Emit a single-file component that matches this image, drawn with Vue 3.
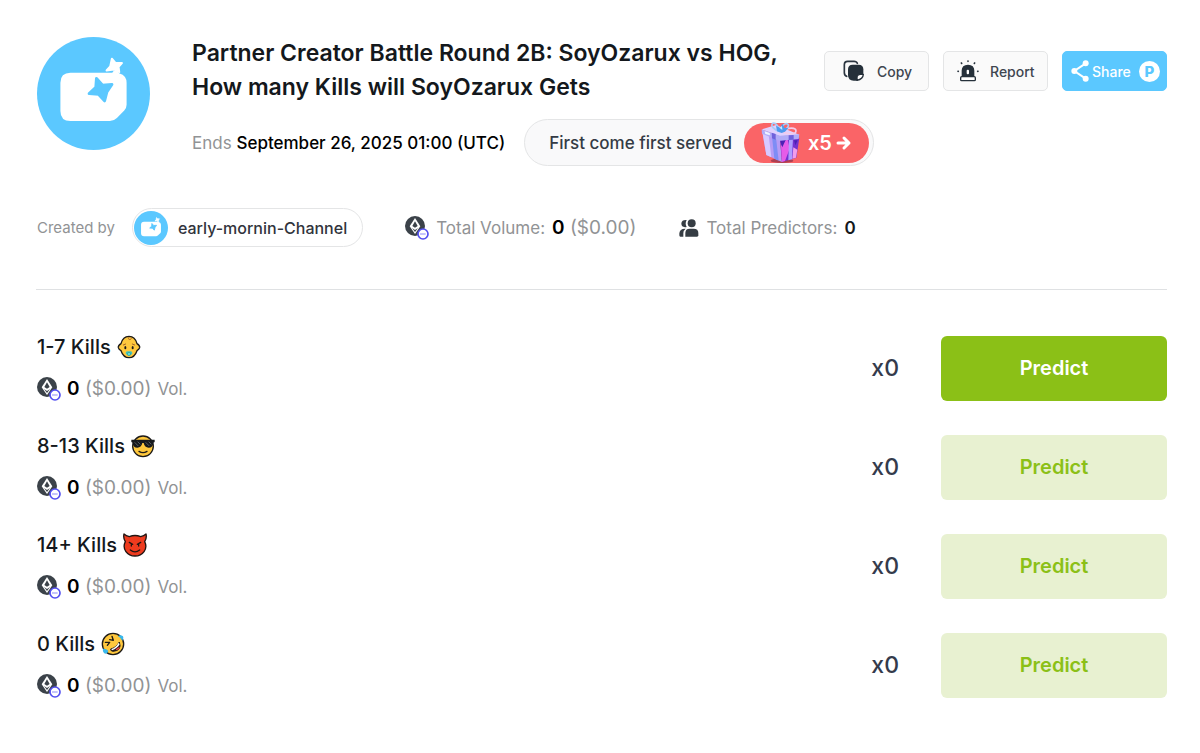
<script setup>
const options = [
  { id: 1, label: '1-7 Kills', emoji: 'baby', picked: true },
  { id: 2, label: '8-13 Kills', emoji: 'cool', picked: false },
  { id: 3, label: '14+ Kills', emoji: 'devil', picked: false },
  { id: 4, label: '0 Kills', emoji: 'rofl', picked: false }
]
</script>

<template>
  <svg class="sprite" aria-hidden="true">
    <symbol id="brand" viewBox="21 21 338 338">
      <circle cx="190" cy="190" r="169" fill="#5bc8ff" />
      <path
        fill="#fff"
        d="M121 128H245Q251 127 249 122H263Q262 128 268 130Q289 136 289 158V224Q289 234 282 241L260 263Q251 272 239 272H121Q91 272 91 242V158Q91 128 121 128Z"
      />
      <path
        fill="#fff"
        stroke="#fff"
        stroke-width="6"
        stroke-linejoin="round"
        d="M245 86L255 98L275 99L265 110L267 126L251 118L229 121L240 109Z"
      />
      <path
        fill="#5bc8ff"
        stroke="#5bc8ff"
        stroke-width="9"
        stroke-linejoin="round"
        d="M199 145L217 165L245 163L230 185L223 212L205 192L177 190L197 172Z"
      />
    </symbol>
    <symbol id="coin" viewBox="0 0 72 72">
      <circle cx="30" cy="30" r="30" fill="#3b4249" />
      <path fill="#fff" d="M30 6L46 31L30 54L14 31Z" />
      <path fill="#3b4249" d="M30 16L22 30L30 35L38 30ZM21 36L30 42L39 36L30 48Z" />
      <circle cx="54" cy="54" r="15" fill="#fff" stroke="#5350f0" stroke-width="5" />
      <path stroke="#aaa8fb" stroke-width="4" d="M45 54H62" />
    </symbol>
    <symbol id="baby" viewBox="0 0 72 72">
      <path
        fill="#ffc83d"
        stroke="#1d1a18"
        stroke-width="4"
        d="M36 4C50 4 57 14 60 26C65 29 69 33 68 38C67 42 63 45 60 47C56 59 48 68 36 68C24 68 16 59 12 47C8 45 5 42 4 38C3 33 7 29 12 26C15 14 22 4 36 4Z"
      />
      <path fill="none" stroke="#a8642a" stroke-width="3" stroke-linecap="round" d="M36 7C30 13 40 17 43 11M19 30L26 27M53 30L46 27" />
      <ellipse cx="25" cy="38" rx="3" ry="5" fill="#1d1a18" />
      <ellipse cx="47" cy="38" rx="3" ry="5" fill="#1d1a18" />
      <rect x="26" y="49" width="20" height="10" rx="5" fill="#42c5be" />
      <circle cx="36" cy="57" r="5" fill="#65dbd2" stroke="#299b9a" stroke-width="2" />
    </symbol>
    <symbol id="cool" viewBox="0 0 72 72">
      <circle cx="36" cy="37" r="31" fill="#ffc83d" stroke="#1d1a18" stroke-width="4" />
      <path fill="#17191c" d="M1 17H71V24L67 26Q66 41 53 41Q41 41 38 27H34Q31 41 19 41Q6 41 5 26L1 24Z" />
      <path stroke="#798087" stroke-width="2" d="M11 25L22 36M20 23L28 31M44 25L55 36M53 23L61 31" />
      <path fill="none" stroke="#1d1a18" stroke-width="4" stroke-linecap="round" d="M24 52Q36 60 48 52" />
    </symbol>
    <symbol id="devil" viewBox="0 0 72 72">
      <path
        fill="#ee3b1e"
        stroke="#221512"
        stroke-width="4"
        stroke-linejoin="round"
        d="M3 3Q9 9 19 11Q36 4 53 11Q63 9 69 3Q72 15 65 26C76 48 59 69 36 69S-4 48 7 26Q0 15 3 3Z"
      />
      <path
        fill="none"
        stroke="#221512"
        stroke-width="4"
        stroke-linecap="round"
        stroke-linejoin="round"
        d="M19 28L29 34M53 28L43 34M25 34V39M47 34V39M22 51Q36 62 50 51"
      />
    </symbol>
    <symbol id="rofl" viewBox="0 0 72 72">
      <circle cx="36" cy="36" r="32" fill="#ffc83d" stroke="#1d1a18" stroke-width="4" />
      <path
        fill="none"
        stroke="#1d1a18"
        stroke-width="4"
        stroke-linecap="round"
        stroke-linejoin="round"
        d="M13 31L26 31L19 40M33 13L37 25L26 23"
      />
      <path fill="#2b1718" stroke="#1d1a18" stroke-width="3" stroke-linejoin="round" d="M55 30Q64 56 36 58Q28 57 29 51Q46 47 55 30Z" />
      <path fill="#fff" d="M53 32L56 37Q49 49 33 55L31 51Q45 47 53 32Z" />
      <path fill="#e94144" d="M45 52Q53 43 57 47Q54 54 45 55Z" />
      <path fill="#39b8ec" d="M51 13Q58 7 66 13Q70 20 64 26Q59 17 51 13ZM6 50Q15 49 22 56Q20 65 12 65Q4 60 6 50Z" />
    </symbol>
  </svg>

  <main class="page">
    <header class="head">
      <svg class="avatar" role="img" aria-label="Channel picture"><use href="#brand" /></svg>
      <div class="intro">
        <h1>Partner Creator Battle Round 2B: SoyOzarux vs HOG, How many Kills will SoyOzarux Gets</h1>
        <div class="schedule">
          <p class="ends">Ends <strong>September 26, 2025 01:00 (UTC)</strong></p>
          <a href="#rewards" class="promo">
            <span>First come first served</span>
            <span class="reward">
              <svg class="gift" viewBox="0 0 120 126" aria-hidden="true">
                <ellipse cx="66" cy="116" rx="34" ry="7" fill="#8b3149" opacity=".7" />
                <path fill="#b79cf5" d="M6 24L59 42L66 120L19 99Z" />
                <path fill="#d7c9ff" d="M6 24L25 30L34 106L19 99Z" />
                <path fill="#7e8df5" d="M35 34L47 38L56 116L43 110Z" />
                <path fill="#7431cf" d="M59 42L118 47L109 107L66 120Z" />
                <path fill="#e65ce8" d="M63 72L82 48L89 80L75 117L66 120Z" />
                <path fill="#ae9dff" d="M87 47L99 46L96 112L85 115Z" />
                <path fill="#f29dea" d="M100 76L112 83L108 107L97 110Z" />
                <path fill="#4b21b4" d="M61 58L77 54L67 76ZM102 55L113 55L106 70Z" />
                <path fill="#e0d0ff" d="M5 22L48 9L118 38L60 43Z" />
                <path fill="#b1acf7" d="M5 22L60 41L118 37L116 51L59 56L6 35Z" />
                <path fill="#6f61db" d="M35 32L47 36V53L36 49ZM86 40L101 39V53L86 54Z" />
                <path fill="#eef1ff" d="M14 28L29 33L30 40L16 36Z" />
                <g fill="none" stroke-linecap="round" stroke-width="5">
                  <path stroke="#a9ccfa" d="M61 29C43 26 30 10 38 4C47 0 57 15 61 29C64 11 76 1 84 7C89 13 75 28 61 29" />
                  <path stroke="#f4cbe9" d="M63 29C87 14 108 16 108 27C108 38 87 37 63 29" />
                </g>
                <path fill="#4e9aee" d="M48 11L60 17L67 5L74 18L85 18L75 29L65 33L51 28Z" />
                <path fill="#c8e9ff" d="M58 17L66 12L67 24Z" />
              </svg>
              <b>x5</b>
              <svg class="arrow" viewBox="0 0 16 16" aria-hidden="true">
                <path d="M2 8H13M8 3L13 8L8 13" />
              </svg>
            </span>
          </a>
        </div>
      </div>
      <div class="actions">
        <button type="button" class="tool copy">
          <svg viewBox="0 0 66 66" aria-hidden="true">
            <path fill="none" stroke="#2b3540" stroke-width="5" stroke-linecap="round" d="M11 49Q4 46 4 38V14Q4 4 14 4H33Q41 4 43 10" />
            <path fill="#25303a" d="M29 14H47Q61 14 61 28V43L43 62H32Q15 62 15 45V28Q15 14 29 14Z" />
            <path fill="#fff" stroke="#25303a" stroke-width="4" stroke-linejoin="round" d="M42 61V53Q42 43 52 43H61Q60 57 42 61Z" />
          </svg>
          Copy
        </button>
        <button type="button" class="tool report">
          <svg viewBox="0 0 66 66" aria-hidden="true">
            <path fill="#25303a" d="M14 48V32Q14 14 33 14T52 32V48Z" />
            <rect x="29" y="29" width="7" height="14" rx="3" fill="#fff" />
            <rect x="11" y="50" width="44" height="12" rx="3" fill="#fff" stroke="#25303a" stroke-width="4" />
            <path stroke="#25303a" stroke-width="5" stroke-linecap="round" d="M33 3V4M13 9L14 10M53 9L52 10M3 34H4M62 34H63" />
          </svg>
          Report
        </button>
        <button type="button" class="tool share">
          <svg viewBox="0 0 54 66" aria-hidden="true">
            <path fill="none" stroke="#fff" stroke-width="6" d="M44 10L10 33L44 56" />
            <circle cx="44" cy="10" r="9" fill="#fff" />
            <circle cx="10" cy="33" r="9" fill="#fff" />
            <circle cx="44" cy="56" r="9" fill="#fff" />
          </svg>
          Share
          <span class="point">P</span>
        </button>
      </div>
    </header>

    <section class="stats">
      <span class="by">Created by</span>
      <a href="#channel" class="channel">
        <svg aria-hidden="true"><use href="#brand" /></svg>
        early-mornin-Channel
      </a>
      <p class="stat volume">
        <svg class="coin" aria-hidden="true"><use href="#coin" /></svg>
        <span>Total Volume:</span>
        <span class="money"><b>0</b> ($0.00)</span>
      </p>
      <p class="stat">
        <svg class="people" viewBox="0 0 60 54" aria-hidden="true">
          <g fill="#353c43">
            <circle cx="38" cy="13" r="12" />
            <path d="M19 53V42Q19 29 32 29H44Q58 29 58 42V49Q58 53 54 53Z" />
            <path d="M23 3Q17 13 23 24Q7 27 7 13Q8 2 23 3ZM20 29Q13 34 13 43V53H4Q1 53 1 49V43Q2 28 20 29Z" />
          </g>
        </svg>
        <span>Total Predictors:</span>
        <b>0</b>
      </p>
    </section>

    <ul class="options">
      <li v-for="option in options" :key="option.id">
        <div class="info">
          <h2>
            {{ option.label }}
            <svg aria-hidden="true"><use :href="'#' + option.emoji" /></svg>
          </h2>
          <p class="pool">
            <svg class="coin" aria-hidden="true"><use href="#coin" /></svg>
            <span class="money"><b>0</b> ($0.00)</span>
            <span class="unit">Vol.</span>
          </p>
        </div>
        <span class="odds">x0</span>
        <button type="button" class="predict" :class="{ picked: option.picked }">Predict</button>
      </li>
    </ul>
  </main>
</template>

<style>
body {
  background: #fff;
}
</style>

<style scoped>
.page {
  padding: 36px 33px 24px 37px;
  font-family: Inter, "Liberation Sans", sans-serif;
  color: #14181c;
}
h1, h2, p, ul {
  margin: 0;
  padding: 0;
}
a {
  color: inherit;
  text-decoration: none;
}
button {
  font-family: inherit;
  cursor: pointer;
}
svg {
  display: block;
  flex: none;
}
.sprite {
  position: absolute;
  width: 0;
  height: 0;
}
.head {
  display: flex;
  align-items: flex-start;
}
.avatar {
  width: 113px;
  height: 113px;
  margin: 1px 42px 0 0;
}
.intro {
  flex: 1;
  min-width: 0;
}
h1 {
  max-width: 600px;
  font-size: 23px;
  line-height: 34px;
  font-weight: 600;
}
.schedule {
  display: flex;
  align-items: center;
  gap: 19px;
  margin-top: 15px;
  white-space: nowrap;
}
.ends {
  font-size: 17px;
  color: #919395;
}
.ends strong {
  font-weight: 500;
  color: #000;
}
.promo {
  display: flex;
  align-items: center;
  gap: 12px;
  height: 45px;
  padding: 0 4px 0 24px;
  border: 1px solid #e4e5e6;
  border-radius: 24px;
  background: #f9f9fa;
  font-size: 17px;
  font-weight: 500;
  color: #343b45;
}
.reward {
  display: flex;
  align-items: center;
  height: 40px;
  padding: 0 17px 0 16px;
  border-radius: 20px;
  background: #fa6467;
  color: #fff;
  font-size: 20px;
}
.reward b {
  margin: 0 4px 0 8px;
  font-weight: 600;
}
.gift {
  width: 40px;
  height: 42px;
}
.arrow {
  width: 16px;
  height: 16px;
  fill: none;
  stroke: #fff;
  stroke-width: 3;
  stroke-linecap: round;
  stroke-linejoin: round;
}
.actions {
  display: flex;
  gap: 14px;
  padding-top: 15px;
}
.tool {
  display: flex;
  align-items: center;
  width: 105px;
  height: 40px;
  padding: 0;
  border: 1px solid #e4e5e6;
  border-radius: 5px;
  background: #fafafa;
  font-size: 14px;
  font-weight: 500;
  color: #3f4650;
}
.tool svg {
  width: 22px;
  height: 22px;
}
.copy {
  gap: 12px;
  padding-left: 18px;
}
.report {
  gap: 11px;
  padding-left: 13px;
}
.share {
  gap: 3px;
  padding: 0 6px 0 8px;
  border-color: #5bc8ff;
  background: #5bc8ff;
  color: #fff;
}
.share svg {
  width: 18px;
}
.point {
  width: 21px;
  margin-left: auto;
  border-radius: 50%;
  background: #fff;
  color: #5bc8ff;
  font-size: 15px;
  line-height: 21px;
  font-weight: 800;
  text-align: center;
}
.stats {
  display: flex;
  align-items: center;
  margin-top: 42px;
  padding-bottom: 43px;
  position: relative;
  white-space: nowrap;
  color: #919395;
}
.stats::after {
  content: "";
  position: absolute;
  left: -1px;
  right: 0;
  bottom: 0;
  height: 1px;
  background: #dfe1e3;
}
.by {
  margin-right: 17px;
  font-size: 15px;
}
.channel {
  display: flex;
  align-items: center;
  gap: 10px;
  height: 37px;
  padding: 0 15px 0 1px;
  border: 1px solid #e4e5e6;
  border-radius: 20px;
  font-size: 16px;
  font-weight: 500;
  color: #31343c;
}
.channel svg {
  width: 34px;
  height: 34px;
}
.stat {
  display: flex;
  align-items: center;
  gap: 7px;
  font-size: 17px;
}
.stat b {
  font-weight: 600;
  color: #14181c;
}
.volume {
  margin: 0 43px 0 42px;
}
.coin {
  width: 24px;
  height: 24px;
}
.people {
  width: 20px;
  height: 18px;
}
.money {
  font-size: 19px;
}
.money b {
  font-weight: 600;
  color: #000;
}
.options {
  display: grid;
  gap: 33px;
  margin-top: 45px;
  list-style: none;
}
.options li {
  display: flex;
  align-items: center;
}
.info {
  flex: 1;
}
h2 {
  display: flex;
  align-items: center;
  gap: 6px;
  font-size: 20px;
  line-height: 24px;
  font-weight: 500;
}
h2 svg {
  width: 24px;
  height: 24px;
}
.pool {
  display: flex;
  align-items: center;
  gap: 6px;
  margin-top: 18px;
  line-height: 24px;
  color: #919395;
}
.unit {
  font-size: 17px;
}
.odds {
  margin-right: 42px;
  font-size: 23px;
  font-weight: 500;
  color: #343b4c;
}
.predict {
  width: 226px;
  height: 65px;
  border: 0;
  border-radius: 6px;
  background: #e8f1d1;
  color: #8bc017;
  font-size: 20px;
  font-weight: 600;
}
.predict.picked {
  background: #8bc017;
  color: #fff;
}
</style>
